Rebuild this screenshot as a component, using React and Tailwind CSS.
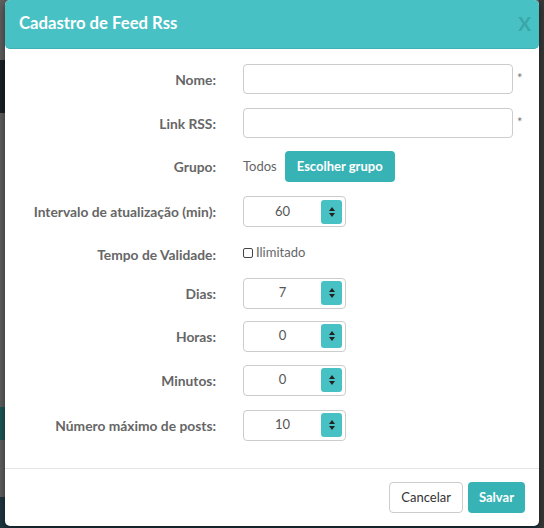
import React from 'react';

const font = { fontFamily: 'Lato, "Open Sans", sans-serif' };

const Spinner = ({ value }) => (
  <div className="flex items-center w-[103px] h-[31px] border border-[#cccccc] rounded-[4px] bg-white pr-[3px]">
    <span className="flex-1 text-center text-[13px] text-[#555555]">{value}</span>
    <span className="flex flex-col items-center justify-center gap-[2px] w-[21px] h-[24px] rounded-[3px] bg-[#48c1c4]">
      <span className="w-0 h-0 border-l-[3px] border-r-[3px] border-b-[4px] border-l-transparent border-r-transparent border-b-[#222222]" />
      <span className="w-0 h-0 border-l-[3px] border-r-[3px] border-t-[4px] border-l-transparent border-r-transparent border-t-[#222222]" />
    </span>
  </div>
);

const Row = ({ label, children, className = '' }) => (
  <div className={`flex items-center ${className}`}>
    <label className="w-[211px] text-right text-[13.8px] font-bold text-[#666666] pt-[2px]">{label}</label>
    <div className="ml-[27px] flex items-center">{children}</div>
  </div>
);

export default function App() {
  return (
    <div className="relative w-[544px] h-[528px] overflow-hidden bg-[#5f5f5f]" style={font}>
      {/* page behind the overlay */}
      <div className="flex flex-col w-full h-full">
        <div className="h-[60px]" />
        <div className="h-[53px] bg-[#182027]" />
        <div className="h-[294px]" />
        <div className="h-[33px] bg-[#1d5755]" />
        <div className="h-[57px]" />
        <div className="flex-1 bg-[#1f3640]" />
      </div>
      <div className="absolute top-0 right-0 w-[5px] h-full bg-[#383838]" />

      {/* modal */}
      <div className="absolute top-0 left-[5px] w-[534px] h-[526px] bg-white rounded-[5px] shadow-[0_3px_9px_rgba(0,0,0,0.5)] flex flex-col">
        <div className="h-[49px] flex items-center justify-between pl-[14px] pr-[8px] bg-[#48c1c4] rounded-[5px] border-b border-[#3fb0b3]">
          <h4 className="text-[16.7px] font-bold text-white">Cadastro de Feed Rss</h4>
          <span className="text-[19px] font-bold text-[#3aa6a8]">X</span>
        </div>

        <div className="flex flex-col pt-[15px] flex-1">
          <Row label="Nome:">
            <div className="w-[270px] h-[30px] border border-[#cccccc] rounded-[4px]" />
            <span className="ml-[4px] text-[13px] text-[#777777]">*</span>
          </Row>
          <Row label="Link RSS:" className="mt-[14px]">
            <div className="w-[270px] h-[30px] border border-[#cccccc] rounded-[4px]" />
            <span className="ml-[4px] text-[13px] text-[#777777]">*</span>
          </Row>
          <Row label="Grupo:" className="mt-[13px]">
            <span className="text-[13px] text-[#666666]">Todos</span>
            <button className="ml-[8px] h-[31px] px-[12px] rounded-[4px] bg-[#38b3b5] text-white text-[13px] font-bold">
              Escolher grupo
            </button>
          </Row>
          <Row label="Intervalo de atualização (min):" className="mt-[14px]">
            <Spinner value="60" />
          </Row>
          <div className="flex items-start mt-[16px]">
            <label className="w-[211px] text-right text-[13.8px] font-bold text-[#666666] pt-[2px]">Tempo de Validade:</label>
            <div className="ml-[27px] flex items-center">
              <span className="w-[10px] h-[10px] border border-[#444444] rounded-[2px]" />
              <span className="ml-[3px] text-[13px] text-[#666666]">Ilimitado</span>
            </div>
          </div>
          <Row label="Dias:" className="mt-[12px]">
            <Spinner value="7" />
          </Row>
          <Row label="Horas:" className="mt-[12px]">
            <Spinner value="0" />
          </Row>
          <Row label="Minutos:" className="mt-[13px]">
            <Spinner value="0" />
          </Row>
          <Row label="Número máximo de posts:" className="mt-[14px]">
            <Spinner value="10" />
          </Row>

          <div className="mt-auto border-t border-[#e5e5e5] h-[58px] flex items-center justify-end gap-[5px] pr-[14px]">
            <button className="h-[31px] px-[11px] rounded-[4px] border border-[#cccccc] bg-white text-[13px] text-[#333333]">
              Cancelar
            </button>
            <button className="h-[31px] px-[11px] rounded-[4px] bg-[#38b3b5] text-white text-[13px] font-bold">
              Salvar
            </button>
          </div>
        </div>
      </div>
    </div>
  );
}
